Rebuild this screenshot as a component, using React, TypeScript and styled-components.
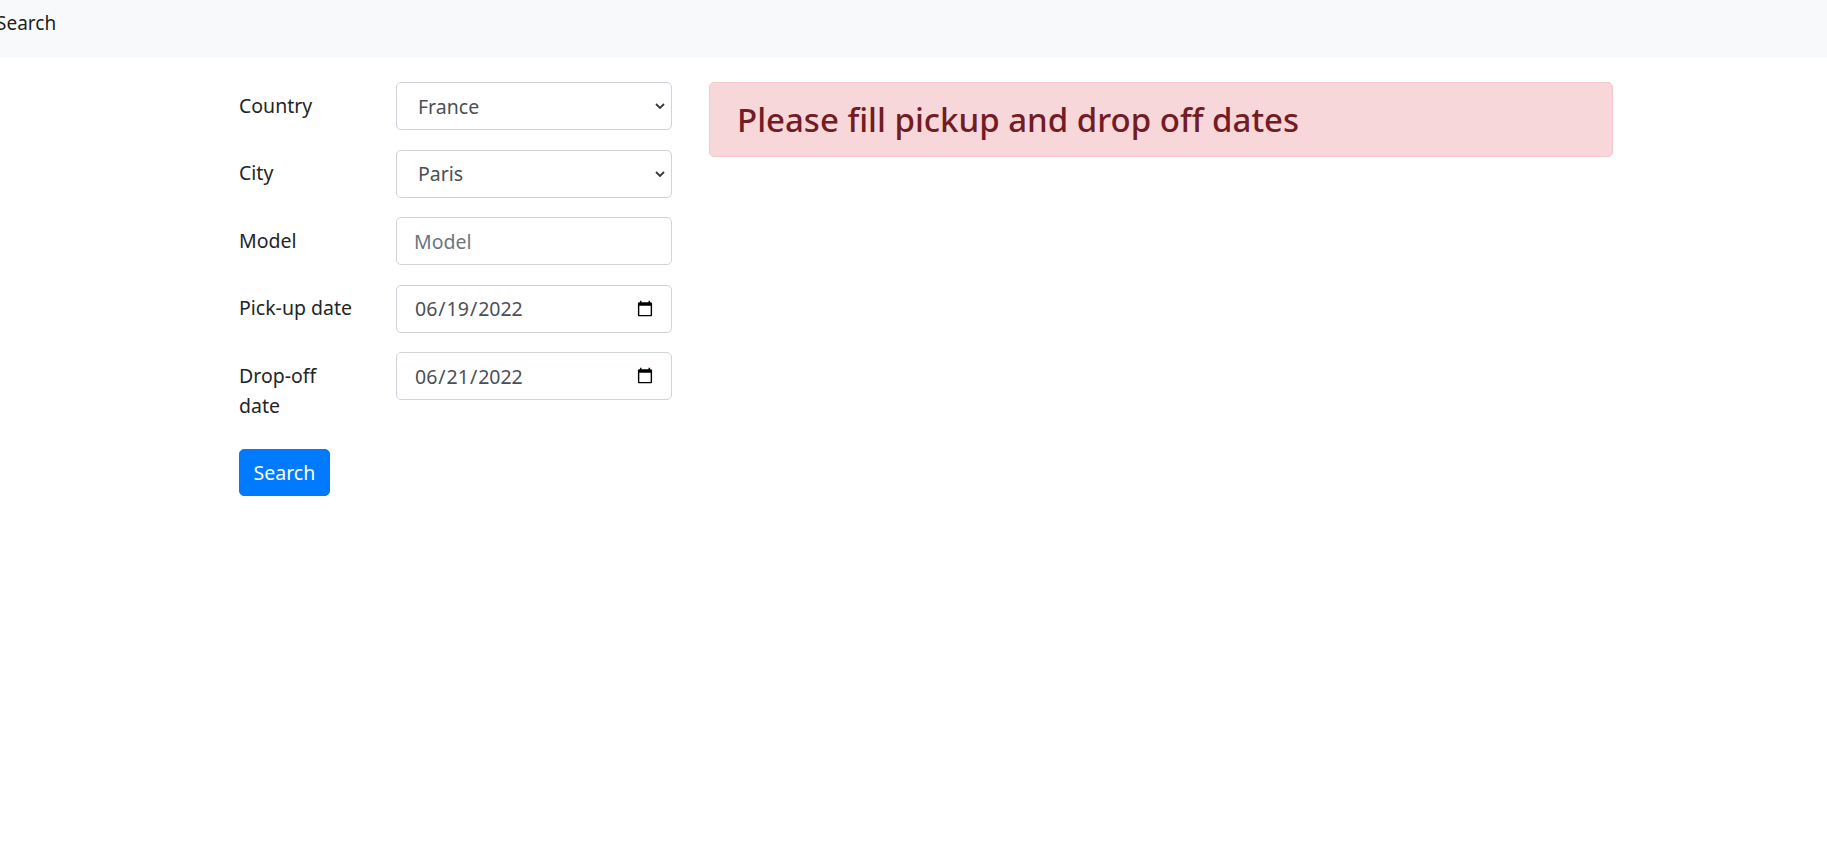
import React from "react";
import styled, { createGlobalStyle } from "styled-components";

const GlobalStyle = createGlobalStyle`
  *, *::before, *::after { box-sizing: border-box; }
  body {
    margin: 0;
    background: #ffffff;
    color: #212529;
    font-family: "Noto Sans", "Open Sans", sans-serif;
    font-size: 19.5px;
    line-height: 30px;
  }
`;

const Navbar = styled.nav`
  height: 57px;
  background: #f8f9fa;
  padding-top: 8px;
  display: flex;
  align-items: flex-start;
`;

const Brand = styled.span`
  margin-left: -4px;
  font-size: 19px;
  line-height: 30px;
  color: rgba(0, 0, 0, 0.9);
`;

const Main = styled.main`
  display: flex;
  align-items: flex-start;
  gap: 37px;
  padding: 25px 0 0 239px;
`;

const Form = styled.form`
  width: 433px;
  display: flex;
  flex-direction: column;
  gap: 19.5px;
`;

const FormRow = styled.div`
  display: grid;
  grid-template-columns: 119px 276px;
  column-gap: 38px;
  align-items: start;
`;

const Label = styled.label`
  padding: 8.5px 0;
  font-size: 19.5px;
  line-height: 30px;
  color: #212529;
`;

const controlBase = `
  width: 100%;
  height: 48px;
  border: 1px solid #ced4da;
  border-radius: 5px;
  background: #ffffff;
  font-family: "Noto Sans", "Open Sans", sans-serif;
  font-size: 19.5px;
  color: #495057;
  outline: none;
`;

const SelectWrap = styled.div`
  position: relative;
`;

const Select = styled.select`
  ${controlBase}
  appearance: none;
  -webkit-appearance: none;
  padding: 0 40px 0 21px;
`;

const Chevron = styled.svg`
  position: absolute;
  right: 6px;
  top: 20px;
  pointer-events: none;
`;

const TextInput = styled.input`
  ${controlBase}
  padding: 0 17px;
  &::placeholder {
    color: #6c757d;
    opacity: 1;
  }
`;

const DateInput = styled.input`
  ${controlBase}
  padding: 0 15px 0 17px;
  &::-webkit-calendar-picker-indicator {
    width: 18px;
    height: 18px;
    margin-right: 0;
  }
`;

const Button = styled.button`
  align-self: flex-start;
  padding: 8px 13.5px;
  border: 1px solid #007bff;
  border-radius: 5px;
  background: #007bff;
  color: #ffffff;
  font-family: "Noto Sans", "Open Sans", sans-serif;
  font-size: 19.5px;
  line-height: 29px;
`;

const Alert = styled.div`
  width: 904px;
  background: #f8d7da;
  border: 1px solid #f5c6cb;
  border-radius: 5px;
  padding: 18.5px 27px;
`;

const AlertHeading = styled.h4`
  margin: 0;
  font-size: 33px;
  line-height: 36px;
  font-weight: 500;
  color: #721c24;
`;

const ChevronIcon = () => (
  <Chevron width="12" height="8" viewBox="0 0 12 8">
    <path d="M2 2 L6 6 L10 2" fill="none" stroke="#343a40" strokeWidth="1.8" />
  </Chevron>
);

export default function App() {
  return (
    <>
      <GlobalStyle />
      <Navbar>
        <Brand>Search</Brand>
      </Navbar>
      <Main>
        <Form onSubmit={(e) => e.preventDefault()}>
          <FormRow>
            <Label>Country</Label>
            <SelectWrap>
              <Select defaultValue="France">
                <option>France</option>
              </Select>
              <ChevronIcon />
            </SelectWrap>
          </FormRow>
          <FormRow>
            <Label>City</Label>
            <SelectWrap>
              <Select defaultValue="Paris">
                <option>Paris</option>
              </Select>
              <ChevronIcon />
            </SelectWrap>
          </FormRow>
          <FormRow>
            <Label>Model</Label>
            <TextInput type="text" placeholder="Model" />
          </FormRow>
          <FormRow>
            <Label>Pick-up date</Label>
            <DateInput type="date" defaultValue="2022-06-19" />
          </FormRow>
          <FormRow>
            <Label>Drop-off date</Label>
            <DateInput type="date" defaultValue="2022-06-21" />
          </FormRow>
          <Button type="submit">Search</Button>
        </Form>
        <Alert role="alert">
          <AlertHeading>Please fill pickup and drop off dates</AlertHeading>
        </Alert>
      </Main>
    </>
  );
}
